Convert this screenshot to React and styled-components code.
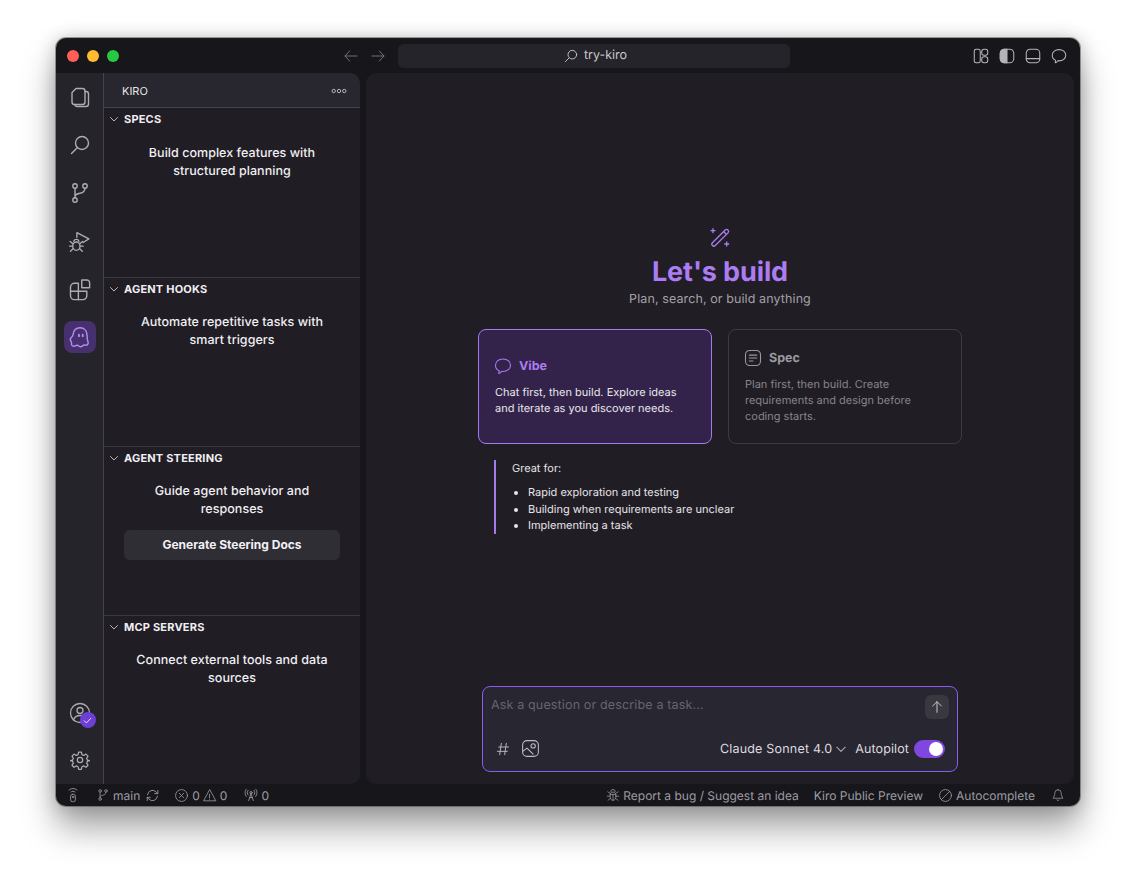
import React from 'react';
import styled, { createGlobalStyle } from 'styled-components';

const Global = createGlobalStyle`
  html, body { margin: 0; padding: 0; background: #fff; }
  body { font-family: Inter, "Noto Sans", sans-serif; -webkit-font-smoothing: antialiased; text-rendering: geometricPrecision; }
  * { box-sizing: border-box; }
`;

const Page = styled.div`
  width: 1136px; height: 880px; padding: 38px 56px 74px; overflow: hidden; background: #fff;
`;
const Win = styled.div`
  width: 1024px; height: 768px; display: flex; flex-direction: column; border-radius: 10px;
  background: #17161b; overflow: hidden;
  box-shadow: 0 0 0 1px rgba(60,60,60,.45), 0 22px 34px rgba(0,0,0,.36), 0 0 18px rgba(0,0,0,.22);
`;
const TitleBar = styled.header`
  height: 35px; flex: none; display: flex; align-items: center; padding-left: 11px; position: relative;
`;
const Lights = styled.div`display: flex; gap: 8px; width: 60px;`;
const Light = styled.span`
  width: 12px; height: 12px; border-radius: 50%; background: ${p => p.$c};
`;
const NavArrows = styled.div`
  margin-left: 216px; width: 43px; display: flex; justify-content: space-between; color: #7f7d84;
`;
const SearchBar = styled.div`
  margin-left: 12px; width: 392px; height: 24px; border-radius: 6px; background: #25242a; padding-left: 2px;
  display: flex; align-items: center; justify-content: center; gap: 5px; color: #c9c8cc; font-size: 12.5px;
`;
const TitleActions = styled.div`
  margin-left: auto; margin-right: 12px; display: flex; gap: 8px; color: #b5b4b9;
`;
const Body = styled.div`flex: 1; display: flex; min-height: 0; padding-right: 6px; gap: 6px;`;
const SideWrap = styled.div`
  width: 304px; flex: none; display: flex; border-radius: 0 10px 10px 0; overflow: hidden; background: #201d25;
`;
const Activity = styled.nav`
  width: 48px; flex: none; background: #25242b; border-right: 1px solid #45434b;
  display: flex; flex-direction: column; align-items: center; padding: 8px 0; gap: 16px; color: #adacb1;
`;
const ActivityBottom = styled.div`
  margin-top: auto; display: flex; flex-direction: column; gap: 15px;
`;
const ActivityItem = styled.div`
  width: 32px; height: 32px; display: flex; align-items: center; justify-content: center; border-radius: 8px;
  position: relative;
  background: ${p => (p.$active ? '#46306d' : 'transparent')};
  color: ${p => (p.$active ? '#b58cf5' : 'inherit')};
`;
const Badge = styled.span`
  position: absolute; right: 0; bottom: 1px; width: 16px; height: 16px; border-radius: 50%;
  background: #6e3fd4; display: flex; align-items: center; justify-content: center; color: #e9e0fb;
`;
const SidePanel = styled.aside`flex: 1; min-width: 0; display: flex; flex-direction: column;`;
const PanelHead = styled.div`
  height: 35px; flex: none; background: #28272f; border-bottom: 1px solid #45434b;
  display: flex; align-items: center; justify-content: space-between; padding: 1px 13px 0 18px;
  font-size: 11px; color: #e6e5e8;
`;
const Section = styled.section`
  height: 169px; flex: none;
  border-top: ${p => (p.$first ? 'none' : '1px solid #3a3840')};
`;
const SectionHead = styled.div`
  height: 22px; display: flex; align-items: center; gap: 5px; padding-left: 5px;
  font-size: 11px; font-weight: 700; color: #f0eff2; letter-spacing: .2px; text-transform: uppercase;
`;
const SectionChevron = styled.span`display: flex; color: #b5b4b9;`;
const SectionText = styled.p`
  margin: ${p => (p.$first ? 15 : 14)}px 20px 0; font-size: 12.5px; line-height: 18px; font-weight: 500; text-align: center;
  color: #f0eff2; letter-spacing: .04px;
`;
const GenButton = styled.button`
  display: block; width: 216px; height: 30px; margin: 11px 20px 0; padding: 0 0 2px; border: 0; border-radius: 6px;
  background: #302e35; color: #f2f1f4; font: 700 12px Inter, sans-serif;
`;
const Main = styled.main`
  flex: 1; min-width: 0; background: #201d25;
  border-radius: 10px; display: flex; flex-direction: column; align-items: center; padding: 153px 0 12px;
`;
const Wand = styled.div`height: 22px; color: #ab7cf2; display: flex; margin-top: 1px;`;
const Title = styled.h1`
  margin: 3px 0 0; font-size: 27px; line-height: 40px; font-weight: 700; color: #ab7cf2; letter-spacing: -.1px;
`;
const Subtitle = styled.p`
  margin: -1px 0 0; font-size: 12.5px; line-height: 18px; color: #a3a1a8; letter-spacing: .1px;
`;
const Cards = styled.div`display: flex; gap: 16px; margin-top: 20px;`;
const Card = styled.div`
  width: 234px; height: 115px; border-radius: 8px; padding: 0 16px; display: flex; flex-direction: column; justify-content: center;
  border: 1px solid ${p => (p.$active ? '#a57bec' : '#3d3b42')};
  background: ${p => (p.$active ? '#33234a' : 'transparent')};
`;
const CardHead = styled.div`
  display: flex; align-items: center; gap: 6px; margin-left: -2px; font-size: 12.5px; font-weight: 700;
  color: ${p => (p.$active ? '#ab7cf2' : '#9b999f')};
`;
const CardText = styled.p`
  margin: 7.5px 0 0; font-size: 11px; line-height: 16.4px;
  color: ${p => (p.$active ? '#e9e7ec' : '#87858b')};
`;
const Great = styled.div`
  align-self: flex-start; margin: 16px 0 0 128px; height: 74px; padding-left: 16px; border-left: 2px solid #a57bec;
  font-size: 11px; color: #e6e5e8;
`;
const GreatTitle = styled.div`line-height: 16px;`;
const GreatList = styled.ul`
  margin: 8px 0 0; padding: 0 0 0 16px; line-height: 16.5px;
`;
const Composer = styled.div`
  margin-top: auto; width: 476px; height: 86px; border-radius: 8px; border: 1px solid #8a5cf0; background: #282630;
  display: flex; flex-direction: column; padding: 8px;
`;
const ComposerTop = styled.div`display: flex; justify-content: space-between; align-items: flex-start;`;
const Placeholder = styled.span`font-size: 12.5px; line-height: 21px; color: #67656c; letter-spacing: .15px;`;
const SendBtn = styled.div`
  width: 24px; height: 24px; border-radius: 6px; background: #39373f; color: #c9c8cc;
  display: flex; align-items: center; justify-content: center;
`;
const ComposerBottom = styled.div`
  margin-top: auto; display: flex; align-items: center; padding: 0 4px 4px 4px; color: #bdbcc1;
`;
const ComposerTools = styled.div`display: flex; align-items: center; gap: 9px;`;
const ModelPick = styled.div`
  margin-left: auto; display: flex; align-items: center; gap: 3px; font-size: 12.5px; color: #dddce0; letter-spacing: .2px; padding-top: 1px;
`;
const ModelChevron = styled.span`display: flex; color: #a9a8ad;`;
const AutoLabel = styled.span`margin-left: 8px; padding-top: 1px; font-size: 12.5px; color: #dddce0; letter-spacing: .1px;`;
const Toggle = styled.div`
  margin-left: 5px; width: 31px; height: 18px; border-radius: 9px; background: #7f47e0; position: relative;
  &::after { content: ''; position: absolute; right: 2px; top: 2px; width: 14px; height: 14px; border-radius: 50%; background: #fff; }
`;
const Status = styled.footer`
  height: 22px; flex: none; display: flex; align-items: center; padding: 0 15px 0 9px; color: #9d9ca2; font-size: 12px;
`;
const StatusItem = styled.span`
  display: flex; align-items: center; gap: ${p => p.$gap ?? 3}px; margin-left: ${p => p.$ml ?? 0}px;
`;
const Spacer = styled.div`flex: 1;`;

const I = ({ s = 20, vb = 24, w = 1.5, children }) => (
  <svg width={s} height={s} viewBox={`0 0 ${vb} ${vb}`} fill="none" stroke="currentColor" strokeWidth={w} strokeLinecap="round" strokeLinejoin="round">{children}</svg>
);

const IconFiles = () => <I s={24} w={1.4}><path d="M4 7.500 8 3.500h6.500A2.500 2.500 0 0 1 17 6v11a2.500 2.500 0 0 1-2.500 2.500h-8A2.500 2.500 0 0 1 4 17z" /><path d="M17 6.500h1A2.500 2.500 0 0 1 20.500 9v10a2.500 2.500 0 0 1-2.500 2.500H9A2.500 2.500 0 0 1 6.800 20" /></I>;
const IconSearch = ({ s = 24 }) => <I s={s} w={1.4}><circle cx="14" cy="10" r="6.500" /><path d="m9 15-5.500 5.500" /></I>;
const IconGit = ({ s = 24, w = 1.4 }) => <I s={s} w={w}><circle cx="7" cy="5" r="2.200" /><circle cx="7" cy="19" r="2.200" /><circle cx="17" cy="5" r="2.200" /><path d="M7 7.200v9.600M17 7.200c0 4-3 4.800-6 5.300-2.500.4-4 1.500-4 3.500" /></I>;
const IconDebug = () => <I s={25} w={1.3}><path d="M9.500 8V3.500L21 9.500 15.500 13" /><ellipse cx="9" cy="16.500" rx="3.500" ry="4" /><path d="M6.500 11.800a2.600 2.600 0 0 1 5 0M5.500 14 3 12M5.300 16.500H2.500M5.800 19l-2.500 2.300M12.500 14l2.500-2M12.700 16.500h2.800M12.200 19l2.500 2.300" /></I>;
const IconExt = () => <I s={27} w={1.25}><path d="M11 6.500H7.500A3.500 3.500 0 0 0 4 10v7.500A3.500 3.500 0 0 0 7.500 21H15a3.500 3.500 0 0 0 3.500-3.500V13.500H11z" /><path d="M4 13.500h7M11 13.500V21" /><path d="M14 3.500h4.500A2.500 2.500 0 0 1 21 6v4.500h-7z" /></I>;
const IconGhost = () => <I s={26} w={1.3}><path d="M12 3.500c4 0 6.500 3 6.500 7 0 3 .5 5 1 6.500.4 1.500-1 3-2.500 2.500-1-.3-1.800-.2-2.500.5-1 1-2.300 1.200-3.500.3-1-.8-2-1-3-.3-1.500 1-3.500.5-3.800-1-.2-1 .3-1.800-.2-2.500-.8-1-1.500-2.300-.5-3.500 1-1 1.800-1.500 2-3 .5-4 3-6.500 6.500-6.500z" /><path d="M11 9.800v1.400M14.500 9.800v1.400" strokeWidth="1.700" /></I>;
const IconAccount = () => <I s={24} w={1.3}><circle cx="12" cy="12" r="9.500" /><circle cx="12" cy="9.500" r="3" /><path d="M5.500 19c1-3 3.500-4.500 6.500-4.500s5.500 1.500 6.500 4.500" /></I>;
const IconGear = () => <I s={20} vb={24} w={1.5}><circle cx="12" cy="12" r="3.200" /><path d="M10.300 2.500h3.400l.6 3 2.300 1 2.600-1.600 2.400 2.400-1.600 2.600 1 2.300 3 .6-3 .6-1 2.300 1.600 2.600-2.400 2.400-2.600-1.600-2.300 1-.6 3h-3.400l-.6-3-2.300-1-2.600 1.600-2.400-2.400 1.600-2.600-1-2.300-3-.6 3-.6 1-2.300-1.600-2.600 2.400-2.400 2.600 1.600 2.300-1z" /></I>;
const Chevron = ({ s = 10, w = 1 }) => <I s={s} vb={10} w={w}><path d="m1.500 3.500 3.500 3.500 3.500-3.500" /></I>;
const Dots = () => <svg width="16" height="6" viewBox="0 0 16 6" fill="none" stroke="#b5b4b9" strokeWidth="1"><circle cx="2.700" cy="3" r="1.700" /><circle cx="8" cy="3" r="1.700" /><circle cx="13.300" cy="3" r="1.700" /></svg>;
const IconWand = () => <I s={22} vb={22} w={1.3}><rect x="-2" y="-11" width="4" height="22" rx="2" transform="translate(11.200 10.800) rotate(45)" /><path d="M14.800 4.800 17.200 7.200M4 1.700v4M2 3.700h4M17.700 15v4M15.700 17h4" /></I>;
const IconChat = ({ s = 18, w = 1.5 }) => <I s={s} w={w}><path d="M12 3.500c5 0 9 3 9 7.500s-4 7.500-9 7.500h-2c-.5 1.500-2 2.500-3 2.500l.3-3.500C4.500 16.500 3 14 3 11c0-4.500 4-7.500 9-7.500z" /></I>;
const IconSpec = () => <I s={20} w={1.3}><rect x="3" y="3" width="18" height="18" rx="5" /><path d="M7.500 8.500h9M7.500 12h9M7.500 15.500h4.500" /></I>;
const IconHash = () => <I s={16} w={1.4}><path d="M5.500 9h15M3.500 15.500h15M9.500 3.500l-2.500 17M17 3.500l-2.500 17" /></I>;
const IconImage = () => <I s={21} w={1.2}><rect x="3" y="3" width="18" height="18" rx="5" /><circle cx="15" cy="9" r="2.500" /><path d="M3.500 15 8 11.500l7 7" /></I>;
const IconUp = () => <I s={16} w={1.5}><path d="M12 20V4M5.500 10.500 12 4l6.500 6.500" /></I>;
const IconArrow = ({ left }) => <I s={16} w={1.3}>{left ? <path d="M21 12H3M10 4.500 3 12l7 7.500" /> : <path d="M3 12h18M14 4.500l7 7.500-7 7.500" />}</I>;
const IconLayout = () => <I s={18} w={1.4}><rect x="3" y="3" width="8" height="18" rx="2.500" /><rect x="13" y="3" width="8" height="8" rx="3" /><rect x="13" y="13" width="8" height="8" rx="3" /></I>;
const IconPanelL = () => <svg width="18" height="18" viewBox="0 0 24 24" fill="none" stroke="currentColor" strokeWidth="1.400"><rect x="3" y="3" width="18" height="18" rx="5.500" /><path d="M12 3H8.500A5.500 5.500 0 0 0 3 8.500v7A5.500 5.500 0 0 0 8.500 21H12z" fill="currentColor" /></svg>;
const IconPanelB = () => <I s={18} w={1.4}><rect x="3" y="3" width="18" height="18" rx="5" /><path d="M3 15.500h18" /></I>;
const IconBroadcast = ({ s = 14 }) => <I s={s} w={1.5}><circle cx="12" cy="8" r="2" /><path d="M12 10 8 21.500M12 10l4 11.500M9.500 16.500h5M7 12c-2-2-2-6 0-8M17 12c2-2 2-6 0-8M4 14.500C1 11 1 5 4 2M20 14.500c3-3.500 3-9.500 0-12.500" /></I>;
const IconRemote = () => <I s={16} w={1.3}><rect x="8.500" y="11" width="7" height="11" rx="2.500" /><circle cx="12" cy="15" r="1" /><path d="M9 7.500c2-1.500 4-1.500 6 0M6 4.500c4-3 8-3 12 0" /></I>;
const IconSync = () => <I s={15} w={1.4}><path d="M4 11a8 8 0 0 1 14-4.500L20.500 9M20.500 4v5h-5M20 13a8 8 0 0 1-14 4.500L3.500 15M3.500 20v-5h5" /></I>;
const IconErr = () => <I s={15} w={1.3}><circle cx="12" cy="12" r="9.500" /><path d="m8.500 8.500 7 7M15.500 8.500l-7 7" /></I>;
const IconWarn = () => <I s={15} w={1.3}><path d="M12 3 2.500 20.500h19zM12 10v5.500M12 17.800v.2" /></I>;
const IconBug = () => <I s={14} w={1.3}><ellipse cx="12" cy="14" rx="5" ry="7" /><path d="M8 6.500a4 4 0 0 1 8 0M7 11h10M12 11v10M7 9 3 6.500M17 9l4-2.500M6.500 14H2M17.500 14H22M7.500 18 3.500 21M16.500 18l4 3" /></I>;
const IconBan = () => <I s={15} w={1.3}><circle cx="12" cy="12" r="9.500" /><path d="M5.500 18.500l13-13" /></I>;
const IconBell = () => <I s={14} w={1.3}><path d="M12 3a5.500 5.500 0 0 0-5.500 5.500c0 4-1 6.500-3 9h17c-2-2.500-3-5-3-9A5.500 5.500 0 0 0 12 3zM10 20.500a2.500 2.500 0 0 0 4 0" /></I>;

const sections = [
  { t: 'Specs', d: <>Build complex features with<br />structured planning</>, first: true },
  { t: 'Agent Hooks', d: <>Automate repetitive tasks with<br />smart triggers</> },
  { t: 'Agent Steering', d: <>Guide agent behavior and<br />responses</>, btn: 'Generate Steering Docs' },
  { t: 'MCP Servers', d: <>Connect external tools and data<br />sources</> },
];

export default function App() {
  return (
    <Page>
      <Global />
      <Win>
        <TitleBar>
          <Lights>
            <Light $c="#ff5f57" /><Light $c="#febc2e" /><Light $c="#28c840" />
          </Lights>
          <NavArrows><IconArrow left /><IconArrow /></NavArrows>
          <SearchBar><IconSearch s={16} />try-kiro</SearchBar>
          <TitleActions>
            <IconLayout /><IconPanelL /><IconPanelB /><IconChat s={18} w={1.4} />
          </TitleActions>
        </TitleBar>
        <Body>
          <SideWrap>
            <Activity>
              <ActivityItem><IconFiles /></ActivityItem>
              <ActivityItem><IconSearch /></ActivityItem>
              <ActivityItem><IconGit /></ActivityItem>
              <ActivityItem><IconDebug /></ActivityItem>
              <ActivityItem><IconExt /></ActivityItem>
              <ActivityItem $active><IconGhost /></ActivityItem>
              <ActivityBottom>
                <ActivityItem>
                  <IconAccount />
                  <Badge><I s={13} w={1.8}><path d="m6 12.500 4 4 8-8.500" /></I></Badge>
                </ActivityItem>
                <ActivityItem><IconGear /></ActivityItem>
              </ActivityBottom>
            </Activity>
            <SidePanel>
              <PanelHead>KIRO<Dots /></PanelHead>
              {sections.map(s => (
                <Section key={s.t} $first={s.first}>
                  <SectionHead><SectionChevron><Chevron /></SectionChevron>{s.t}</SectionHead>
                  <SectionText $first={s.first}>{s.d}</SectionText>
                  {s.btn && <GenButton>{s.btn}</GenButton>}
                </Section>
              ))}
            </SidePanel>
          </SideWrap>
          <Main>
            <Wand><IconWand /></Wand>
            <Title>Let's build</Title>
            <Subtitle>Plan, search, or build anything</Subtitle>
            <Cards>
              <Card $active>
                <CardHead $active><IconChat s={20} w={1.3} />Vibe</CardHead>
                <CardText $active>Chat first, then build. Explore ideas and iterate as you discover needs.</CardText>
              </Card>
              <Card>
                <CardHead><IconSpec />Spec</CardHead>
                <CardText>Plan first, then build. Create requirements and design before coding starts.</CardText>
              </Card>
            </Cards>
            <Great>
              <GreatTitle>Great for:</GreatTitle>
              <GreatList>
                <li>Rapid exploration and testing</li>
                <li>Building when requirements are unclear</li>
                <li>Implementing a task</li>
              </GreatList>
            </Great>
            <Composer>
              <ComposerTop>
                <Placeholder>Ask a question or describe a task...</Placeholder>
                <SendBtn><IconUp /></SendBtn>
              </ComposerTop>
              <ComposerBottom>
                <ComposerTools><IconHash /><IconImage /></ComposerTools>
                <ModelPick>Claude Sonnet 4.0 <ModelChevron><Chevron s={12} w={.9} /></ModelChevron></ModelPick>
                <AutoLabel>Autopilot</AutoLabel>
                <Toggle />
              </ComposerBottom>
            </Composer>
          </Main>
        </Body>
        <Status>
          <IconRemote />
          <StatusItem $ml={15}><IconGit s={14} w={1.3} />main</StatusItem>
          <StatusItem $ml={5}><IconSync /></StatusItem>
          <StatusItem $ml={14}><IconErr />0</StatusItem>
          <StatusItem $ml={2}><IconWarn />0</StatusItem>
          <StatusItem $ml={17}><IconBroadcast />0</StatusItem>
          <Spacer />
          <StatusItem><IconBug />Report a bug / Suggest an idea</StatusItem>
          <StatusItem $ml={15}>Kiro Public Preview</StatusItem>
          <StatusItem $ml={15}><IconBan />Autocomplete</StatusItem>
          <StatusItem $ml={16}><IconBell /></StatusItem>
        </Status>
      </Win>
    </Page>
  );
}
